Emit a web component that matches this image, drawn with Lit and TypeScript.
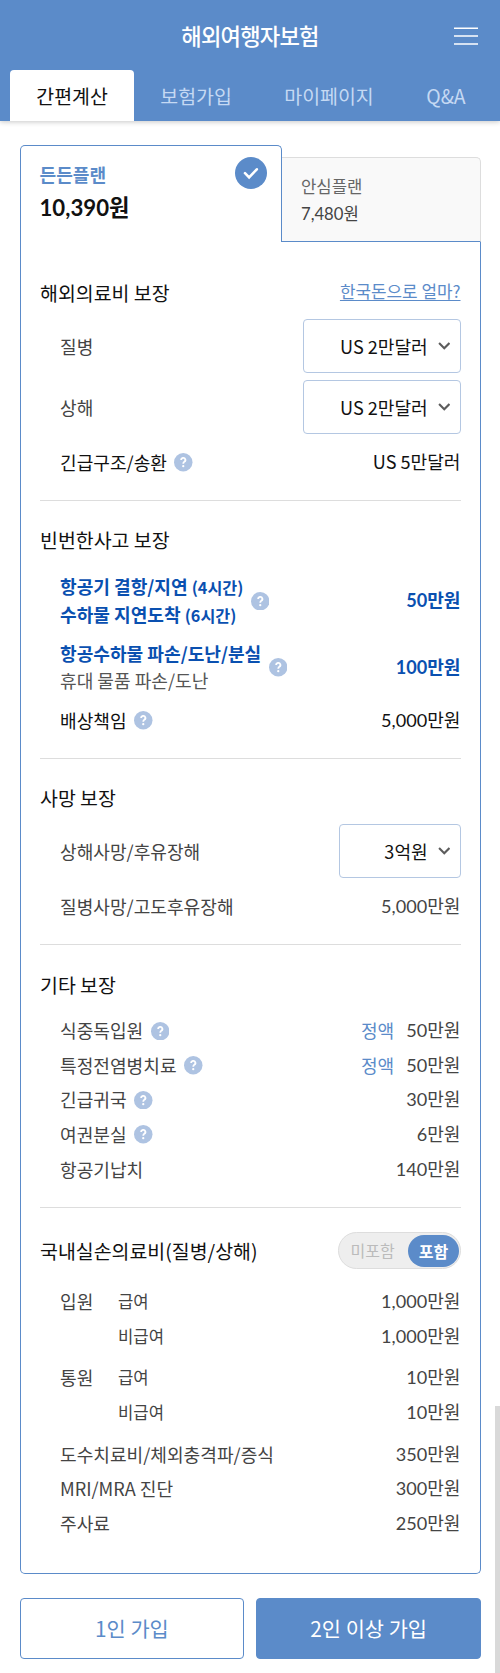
import { LitElement, html, css, nothing } from "lit";
import { customElement } from "lit/decorators.js";

const help = html`<svg class="help" viewBox="0 0 18 18"><circle cx="9" cy="9" r="9" fill="#aec3e2"/><path d="M6.9 6.8A2.1 2 0 1 1 10 8.5Q9 9.1 9 10.4" fill="none" stroke="#fff" stroke-width="1.8"/><circle cx="9" cy="12.8" r="1.1" fill="#fff"/></svg>`;
const caret = html`<svg class="caret" viewBox="0 0 12 8"><path d="M1 1l5 5 5-5" fill="none" stroke="#5c5c5c" stroke-width="2"/></svg>`;

const select = (t: string, cls = "") => html`<div class="select ${cls}"><span>${t}</span>${caret}</div>`;
const row = (label: unknown, value: unknown, cls = "", q = false, fixed = "") => html`
  <div class="row ${cls}"><div class="label">${label}</div>${q ? help : nothing}
    ${fixed ? html`<span class="fixed">${fixed}</span>` : nothing}<div class="value">${value}</div></div>`;
const sub = (group: string, label: string, value: string) => html`
  <div class="row"><div class="group">${group}</div><div class="kind">${label}</div><div class="value">${value}</div></div>`;

@customElement("app-root")
export class AppRoot extends LitElement {
  static styles = css`
    :host { display: block; position: relative; height: 1673px; overflow: hidden; background: #fff; color: #444;
      font: 18.1px/25px "Noto Sans CJK KR", sans-serif; }
    * { box-sizing: border-box; }
    header { height: 121px; background: #5b8bc9; box-shadow: 0 1px 5px rgba(0,0,0,.22); display: flex; flex-direction: column; justify-content: space-between; }
    .bar { height: 69px; display: grid; grid-template-columns: 1fr auto 1fr; align-items: center; padding: 2px 22px 0 22px; }
    h1 { margin: 0; grid-column: 2; font-size: 22.2px; font-weight: 500; letter-spacing: -.8px; color: #fff; }
    .menu { justify-self: end; width: 24px; height: 18px; }
    .menu svg { display: block; }
    nav { display: flex; padding-left: 10px; height: 51.5px; }
    nav a { padding: 0 26.25px; line-height: 52px; font-size: 19.44px; color: #c5d9f3; white-space: nowrap; }
    nav .on { background: #fff; color: #111; border-radius: 4px 4px 0 0; }
    .plans { display: flex; align-items: flex-end; margin: 24px 19px 0 19.5px; height: 97px; }
    .plan { width: 262.5px; height: 97px; border: 1.4px solid #5b8bc9; border-bottom: 0; border-radius: 5px 5px 0 0; padding: 15px 14px 0 19px; display: flex; justify-content: space-between; background: #fff; }
    .name { color: #5b8bc9; font-weight: 700; line-height: 26px; }
    .price { font: 700 22.2px/34px Lato, "Noto Sans CJK KR", sans-serif; color: #111; margin-top: 3.5px; }
    .check { width: 32px; height: 32px; margin-top: -4px; }
    .plan2 { flex: 1; height: 85px; background: #f9f9f9; border: 1px solid #ddd; border-left: 0; border-bottom: 1px solid #5b8bc9; border-radius: 0 5px 0 0; padding: 15px 18px 0 19px; font-size: 16.67px; line-height: 27.8px; color: #666; }
    .price2 { font-family: Lato, "Noto Sans CJK KR", sans-serif; color: #444; margin-top: .5px; }
    .card { margin: 0 19px 0 19.5px; height: 1332px; border: 1.4px solid #5b8bc9; border-top: 0; border-radius: 0 0 5px 5px; padding: 0 19.5px; }
    section { border-bottom: 1px solid #ddd; }
    .s1 { height: 259px; padding-top: 36.5px; }
    .s2 { height: 258px; padding-top: 24.5px; }
    .s3 { height: 186px; padding-top: 24.5px; }
    .s4 { height: 263px; padding-top: 25px; }
    .s5 { border: 0; padding-top: 28.5px; }
    .head { display: flex; justify-content: space-between; align-items: center; height: 28px; margin-bottom: 9.2px; }
    .s2 .head { margin-bottom: 14px; }
    .s4 .head { margin-bottom: 15.5px; }
    .s5 .head { margin-bottom: 19.7px; }
    .after { margin-top: 7.5px; }
    .tall + .dark { margin-top: 2.5px; }
    h2 { margin: 0; font-size: 19.44px; font-weight: 400; color: #111; }
    .link { color: #5b8bc9; font-size: 16.9px; text-decoration: underline; text-underline-offset: 2px; margin-top: -4px; }
    .row { display: flex; align-items: center; height: 34.6px; padding-left: 20px; white-space: nowrap; }
    .value { margin-left: auto; font-family: Lato, "Noto Sans CJK KR", sans-serif; }
    .us { font-family: "Noto Sans CJK KR", sans-serif; }
    .fixed { margin-left: auto; color: #5b8bc9; }
    .fixed + .value { margin-left: 12px; }
    .help { width: 18.5px; height: 18.5px; margin-left: 7.5px; flex: none; }
    .dark { color: #111; }
    .strong { color: #0a50b0; font-weight: 700; line-height: 27.2px; }
    .small { font-size: 16.2px; }
    .plain { color: #555; font-weight: 400; }
    .tall { height: 66.6px; }
    .field { height: 61px; }
    .select { width: 158px; height: 53.4px; border: 1.3px solid #b4c7e2; border-radius: 4px; display: flex; align-items: center; justify-content: flex-end; padding-right: 9.5px; gap: 9.8px; color: #111; font-family: "Noto Sans CJK KR", sans-serif; }
    .select.narrow { width: 121.5px; }
    .caret { width: 12.5px; height: 8.3px; }
    .group { width: 58px; }
    .kind { font-size: 16.67px; }
    .toggle { display: flex; width: 123px; height: 37px; border: 1px solid #ddd; border-radius: 19px; background: #eee; padding: 1.8px .6px 1.8px 12px; align-items: center; justify-content: space-between; font-size: 16px; color: #bbb; }
    .knob { width: 51px; height: 32px; border-radius: 16px; background: #5b8bc9; color: #fff; font-weight: 700; text-align: center; line-height: 32px; }
    .gap { height: 7.2px; }
    .actions { display: flex; gap: 12px; margin: 24.3px 19px 0 19.5px; }
    .btn { flex: 1; height: 61px; border: 1.4px solid #5b8bc9; border-radius: 4px; color: #5b8bc9; font-size: 20.83px; line-height: 59px; text-align: center; }
    .fill { background: #5b8bc9; color: #fff; }
    .scroll { position: absolute; right: 0; top: 1406px; width: 5px; height: 267px; background: #d9d9d9; }
  `;

  render() {
    return html`
      <header>
        <div class="bar"><h1>해외여행자보험</h1><div class="menu"><svg width="24" height="18" viewBox="0 0 24 18"><path d="M0 1.2h24M0 9h24M0 17h24" stroke="#fff" stroke-width="1.6"/></svg></div></div>
        <nav><a class="on">간편계산</a><a>보험가입</a><a>마이페이지</a><a>Q&amp;A</a></nav>
      </header>
      <div class="plans">
        <div class="plan"><div><div class="name">든든플랜</div><div class="price">10,390원</div></div>
          <svg class="check" viewBox="0 0 32 32"><circle cx="16" cy="16" r="16" fill="#5b8bc9"/><path d="M10 16.2l4.1 4.1 7.7-8" fill="none" stroke="#fff" stroke-width="2.6" stroke-linecap="round"/></svg></div>
        <div class="plan2"><div>안심플랜</div><div class="price2">7,480원</div></div>
      </div>
      <div class="card">
        <section class="s1">
          <div class="head"><h2>해외의료비 보장</h2><a class="link">한국돈으로 얼마?</a></div>
          <div class="fields">
            ${row("질병", select("US 2만달러"), "field")}
            ${row("상해", select("US 2만달러"), "field")}
          </div>
          ${row("긴급구조/송환", html`<span class="us">US 5만달러</span>`, "dark after", true)}
        </section>
        <section class="s2">
          <div class="head"><h2>빈번한사고 보장</h2></div>
          ${row(html`항공기 결항/지연 <span class="small">(4시간)</span><br>수하물 지연도착 <span class="small">(6시간)</span>`, "50만원", "strong tall", true)}
          ${row(html`항공수하물 파손/도난/분실<br><span class="plain">휴대 물품 파손/도난</span>`, "100만원", "strong tall", true)}
          ${row("배상책임", "5,000만원", "dark", true)}
        </section>
        <section class="s3">
          <div class="head"><h2>사망 보장</h2></div>
          ${row("상해사망/후유장해", select("3억원", "narrow"), "field")}
          ${row("질병사망/고도후유장해", "5,000만원", "after")}
        </section>
        <section class="s4">
          <div class="head"><h2>기타 보장</h2></div>
          ${row("식중독입원", "50만원", "", true, "정액")}
          ${row("특정전염병치료", "50만원", "", true, "정액")}
          ${row("긴급귀국", "30만원", "", true)}
          ${row("여권분실", "6만원", "", true)}
          ${row("항공기납치", "140만원")}
        </section>
        <section class="s5">
          <div class="head"><h2>국내실손의료비(질병/상해)</h2><div class="toggle"><span>미포함</span><span class="knob">포함</span></div></div>
          ${sub("입원", "급여", "1,000만원")}
          ${sub("", "비급여", "1,000만원")}
          <div class="gap"></div>
          ${sub("통원", "급여", "10만원")}
          ${sub("", "비급여", "10만원")}
          <div class="gap"></div>
          ${row("도수치료비/체외충격파/증식", "350만원")}
          ${row("MRI/MRA 진단", "300만원")}
          ${row("주사료", "250만원")}
        </section>
      </div>
      <div class="actions"><div class="btn">1인 가입</div><div class="btn fill">2인 이상 가입</div></div>
      <div class="scroll"></div>`;
  }
}
